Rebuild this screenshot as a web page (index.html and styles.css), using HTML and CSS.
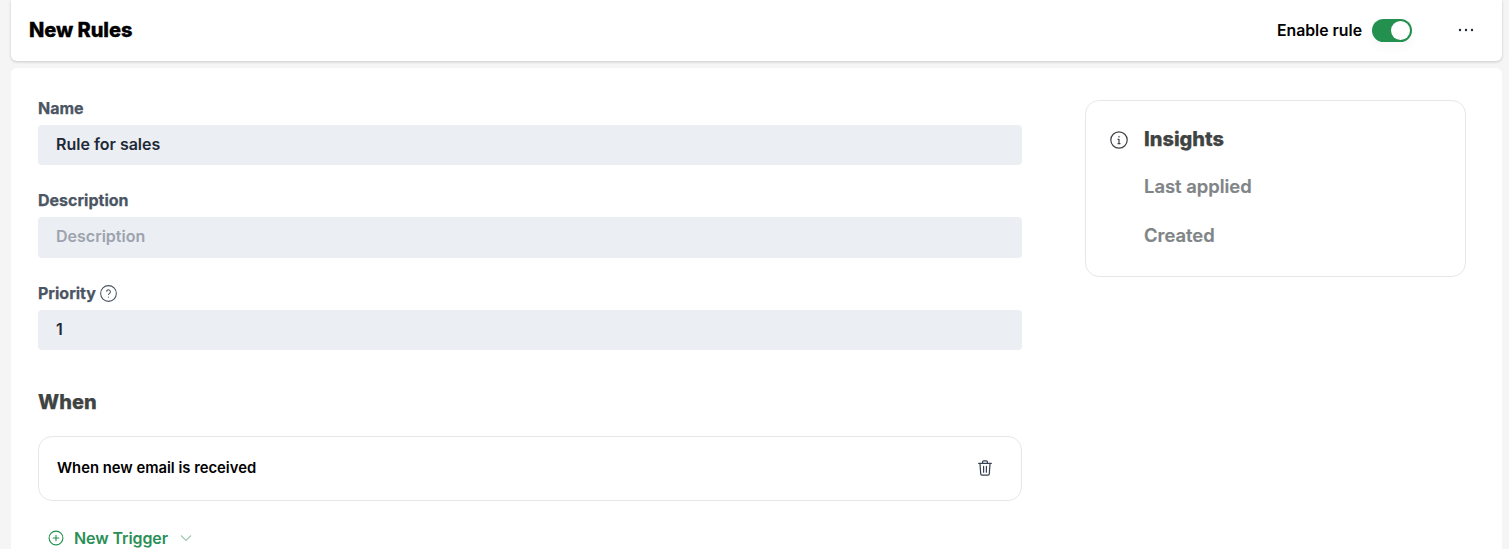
FILE: index.html
```html
<!DOCTYPE html>
<html lang="en">
<head>
  <meta charset="UTF-8">
  <title>New Rules</title>
  <link rel="stylesheet" href="styles.css">
</head>
<body>
  <header class="topbar">
    <h1>New Rules</h1>
    <div class="topbar-actions">
      <span class="enable-label">Enable rule</span>
      <span class="switch"><span class="knob"></span></span>
      <button class="more" aria-label="More">
        <svg width="16" height="4" viewBox="0 0 16 4"><circle cx="2" cy="2" r="1.2"/><circle cx="8" cy="2" r="1.2"/><circle cx="14" cy="2" r="1.2"/></svg>
      </button>
    </div>
  </header>

  <main class="card">
    <section class="form">
      <div class="field">
        <label>Name</label>
        <div class="input">Rule for sales</div>
      </div>
      <div class="field">
        <label>Description</label>
        <div class="input input-tall placeholder">Description</div>
      </div>
      <div class="field field-last">
        <label>Priority
          <svg class="help" width="17" height="17" viewBox="0 0 16 16" fill="none" stroke="#4b5563">
            <circle cx="8" cy="8" r="7.4"/>
            <path d="M6.2 6.3a1.8 1.8 0 1 1 2.7 1.6c-.6.4-.9.7-.9 1.4"/>
            <path d="M8 11v.9"/>
          </svg>
        </label>
        <div class="input">1</div>
      </div>

      <h2>When</h2>
      <div class="trigger">
        <span>When new email is received</span>
        <svg width="14" height="16" viewBox="0 0 14 16" fill="none" stroke="#374151" stroke-width="1.2" stroke-linecap="round" stroke-linejoin="round">
          <path d="M.7 3.4h12.6"/>
          <path d="M4.6 3.2V1.8c0-.6.4-1 1-1h2.8c.6 0 1 .4 1 1v1.4"/>
          <path d="M2 3.6l.7 10.2c0 .8.6 1.4 1.3 1.4h6c.7 0 1.3-.6 1.3-1.4L12 3.6"/>
          <path d="M5.6 6.4v5.8M8.4 6.4v5.8"/>
        </svg>
      </div>
      <button class="new-trigger">
        <svg width="16" height="16" viewBox="0 0 16 16" fill="none" stroke="#23904f" stroke-width="1.1" stroke-linecap="round">
          <circle cx="8" cy="8" r="6.9"/>
          <path d="M8 5.2v5.6M5.2 8h5.6"/>
        </svg>
        <span>New Trigger</span>
        <svg class="chev" width="12" height="8" viewBox="0 0 12 8" fill="none" stroke="#9fc9ae" stroke-width="1.2"><path d="M1 1.5l5 5 5-5"/></svg>
      </button>
    </section>

    <aside class="insights">
      <div class="insights-head">
        <svg width="18" height="18" viewBox="0 0 18 18" fill="none" stroke="#3f3f46" stroke-width="1.2" stroke-linecap="round">
          <circle cx="9" cy="9" r="8.2"/>
          <path d="M9 8.3v4.4M8 8.3h1M8 12.7h2"/>
          <path d="M9 5.4v.5"/>
        </svg>
        <h3>Insights</h3>
      </div>
      <p>Last applied</p>
      <p>Created</p>
    </aside>
  </main>
</body>
</html>
```

FILE: styles.css
```css
* {
  box-sizing: border-box;
}

html, body {
  height: 100%;
}

body {
  font-family: Inter, 'Noto Sans', sans-serif;
  background: #f5f5f5;
  margin: 0;
  padding: 0 7px 0 11px;
  overflow: hidden;
}

.topbar {
  height: 61px;
  background: white;
  border-radius: 0 0 6px 6px;
  box-shadow: 0 1px 3px rgba(0,0,0,0.18);
  padding: 0 28px 1px 18px;
  margin-bottom: 7px;
  display: flex;
  align-items: center;
  justify-content: space-between;
}

h1 {
  margin: 0;
  font-size: 20px;
  font-weight: 800;
  letter-spacing: -0.05px;
  color: #000;
  -webkit-text-stroke: 0.3px #000;
}

.topbar-actions {
  display: flex;
  align-items: center;
}

.enable-label {
  font-size: 15.8px;
  font-weight: 600;
  color: #000;
}

.switch {
  width: 40px;
  height: 23px;
  margin: 0 46px 0 10px;
  background: #23904f;
  border-radius: 12px;
  padding: 2px;
  display: flex;
  justify-content: flex-end;
  box-shadow: 0 6px 12px rgba(0,0,0,0.03);
}

.knob {
  width: 19px;
  height: 19px;
  background: white;
  border-radius: 50%;
}

.more {
  border: none;
  background: none;
  padding: 0;
  display: flex;
  fill: #1f2937;
}

.card {
  background: white;
  border-radius: 6px 6px 0 0;
  height: 490px;
  padding: 32px 36px 0 27px;
  display: flex;
  justify-content: space-between;
  align-items: flex-start;
}

.form {
  width: 984px;
}

.field {
  margin-bottom: 27px;
}

.field-last {
  margin-bottom: 40px;
}

label {
  display: flex;
  align-items: center;
  gap: 4px;
  height: 17px;
  margin-top: -1px;
  margin-bottom: 9px;
  font-size: 16px;
  font-weight: 700;
  color: #4b5563;
  -webkit-text-stroke: 0.25px #4b5563;
}

.help {
  margin-top: 2px;
}

.input {
  height: 40px;
  background: #ebeef2;
  border-radius: 4px;
  padding: 0 18px 3px;
  display: flex;
  align-items: center;
  font-size: 16px;
  font-weight: 600;
  color: #1f2937;
}

.input-tall {
  height: 41px;
}

.placeholder {
  color: #9ca3af;
}

h2 {
  margin: 0 0 22px;
  font-size: 20px;
  font-weight: 800;
  line-height: 24px;
  color: #3f4443;
  -webkit-text-stroke: 0.25px #3f4443;
}

.trigger {
  height: 65px;
  border: 1px solid #e5e7eb;
  border-radius: 14px;
  padding: 0 29px 2px 18px;
  display: flex;
  align-items: center;
  justify-content: space-between;
  font-size: 14.8px;
  font-weight: 600;
  color: #000;
}

.new-trigger {
  border: none;
  background: none;
  margin-top: 27px;
  padding: 0 0 0 10px;
  display: flex;
  align-items: center;
  font-family: inherit;
  font-size: 16px;
  font-weight: 600;
  letter-spacing: -0.1px;
  color: #2a8f56;
}

.new-trigger span {
  margin: 0 12px 0 10px;
}

.insights {
  width: 381px;
  height: 177px;
  border: 1px solid #e5e7eb;
  border-radius: 14px;
  padding: 26px 24px;
}

.insights-head {
  display: flex;
  align-items: center;
  gap: 16px;
  margin-bottom: 23px;
}

h3 {
  margin: 0;
  font-size: 20px;
  font-weight: 800;
  line-height: 25px;
  color: #3f4443;
  -webkit-text-stroke: 0.25px #3f4443;
}

.insights p {
  margin: 0 0 27px 34px;
  font-size: 18.4px;
  font-weight: 600;
  line-height: 22px;
  color: #7f8487;
  -webkit-text-stroke: 0.2px #7f8487;
}
```
